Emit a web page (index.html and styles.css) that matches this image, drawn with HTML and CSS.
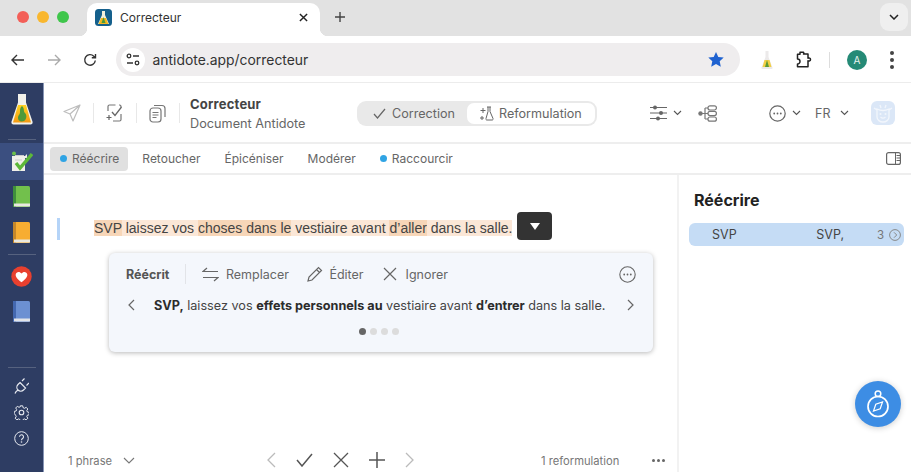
FILE: index.html
```html
<!DOCTYPE html>
<html lang="fr">
<head>
    <meta charset="UTF-8">
    <title>Correcteur</title>
    <link rel="stylesheet" href="styles.css">
</head>
<body>

    <!-- Onglets du navigateur -->
    <div class="tabbar">
        <div class="traffic">
            <span class="light red"></span>
            <span class="light yellow"></span>
            <span class="light green"></span>
        </div>
        <div class="tab">
            <svg class="favicon" width="17" height="17" viewBox="0 0 17 17">
                <rect width="17" height="17" rx="3.500" fill="#15608c"/>
                <path d="M7 2h3v4l4 9H3l4-9z" fill="#f3f0dc"/>
                <path d="M6 9h5l2.400 6H3.600z" fill="#f2b81f"/>
                <path d="M8.500 8l2 6h-4z" fill="#4d9a3a"/>
            </svg>
            <span class="tab-title">Correcteur</span>
            <svg class="tab-close" width="9" height="9" viewBox="0 0 10 10"><path d="M1 1l8 8M9 1l-8 8" stroke="#222" stroke-width="1.600"/></svg>
        </div>
        <svg class="tab-new" width="12" height="12" viewBox="0 0 12 12"><path d="M6 1v10M1 6h10" stroke="#444" stroke-width="1.400"/></svg>
        <div class="tab-menu">
            <svg width="10" height="6" viewBox="0 0 10 6"><path d="M1 1l4 4 4-4" fill="none" stroke="#222" stroke-width="1.500"/></svg>
        </div>
    </div>

    <!-- Barre d'adresse -->
    <div class="toolbar">
        <svg class="nav-back" width="14" height="12" viewBox="0 0 14 12"><path d="M13 6H1.500M6 1L1 6l5 5" fill="none" stroke="#333" stroke-width="1.400"/></svg>
        <svg class="nav-forward" width="14" height="12" viewBox="0 0 14 12"><path d="M1 6h11.500M8 1l5 5-5 5" fill="none" stroke="#aaa" stroke-width="1.400"/></svg>
        <svg class="nav-reload" width="14" height="14" viewBox="0 0 14 14"><path d="M12.300 7.500A5.300 5.300 0 1 1 10.800 3.200L12.500 4.800M12.500 1v3.800H8.800" fill="none" stroke="#333" stroke-width="1.400"/></svg>
        <div class="omnibox">
            <span class="site-icon">
                <svg width="14" height="13" viewBox="0 0 14 13"><circle cx="3" cy="3" r="1.800" fill="none" stroke="#333" stroke-width="1.300"/><path d="M7 3h6M1 10h6" stroke="#333" stroke-width="1.300"/><circle cx="11" cy="10" r="1.800" fill="none" stroke="#333" stroke-width="1.300"/></svg>
            </span>
            <span class="url">antidote.app/correcteur</span>
            <svg class="star" width="16" height="15" viewBox="0 0 16 15"><path d="M8 0l2.300 5 5.400.6-4 3.700 1.100 5.400L8 12l-4.800 2.700 1.100-5.400-4-3.700 5.400-.6z" fill="#1f62d0"/></svg>
        </div>
        <svg class="ext-flask" width="12" height="18" viewBox="0 0 12 18">
            <path d="M4.500 0h3v6l4 10.500a1 1 0 0 1-1 1.500h-9a1 1 0 0 1-1-1.500l4-10.500z" fill="#eceaea"/>
            <path d="M3.500 9h5l2 7H1.500z" fill="#f2cf45"/>
            <path d="M6 9l2 7H4z" fill="#5c9a35"/>
        </svg>
        <svg class="ext-puzzle" width="17" height="17" viewBox="0 0 17 17"><path d="M5 1.200h3.500a1.300 1.300 0 0 1 0 1.800H13v4.300a1.500 1.500 0 0 1 2.500 1.200 1.500 1.500 0 0 1-2.500 1.200V15.800H2.500V13a2.500 2.500 0 0 0 0-5V3.200H5z" fill="none" stroke="#222" stroke-width="1.500" stroke-linejoin="round"/></svg>
        <span class="toolbar-sep"></span>
        <span class="avatar">A</span>
        <span class="kebab"><i></i><i></i><i></i></span>
    </div>

    <div class="app">
        <!-- Barre latérale -->
        <nav class="sidebar">
            <div class="side-logo">
                <svg width="22" height="33" viewBox="0 0 22 33">
                    <defs>
                        <linearGradient id="liquid" x1="0" y1="0" x2="0" y2="1">
                            <stop offset="0" stop-color="#ffd21f"/>
                            <stop offset="1" stop-color="#f39a14"/>
                        </linearGradient>
                    </defs>
                    <path d="M7 1h8v8.500l6.500 19c.5 1.700-.5 3-2 3h-17c-1.500 0-2.500-1.300-2-3L7 9.500z" fill="#f2f1ea"/>
                    <path d="M7 12h8l5 17.500H2z" fill="url(#liquid)"/>
                    <path d="M11 13c3 3 1 5 3 7s2 6-1 8c-3 1-6 0-6-3s2-3 2-6 0-4 2-6z" fill="#4e9a3a"/>
                </svg>
            </div>
            <span class="side-sep logo-sep"></span>
            <div class="side-item active">
                <svg width="22" height="21" viewBox="0 0 22 21">
                    <circle cx="3" cy="2.500" r="2" fill="#6cc04a"/>
                    <path d="M1 5h13l2-2v4l-2 0v13H1z" fill="#f1f0ea"/>
                    <path d="M4 9h7M4 4.500h9" stroke="#ccc" stroke-width="1"/>
                    <path d="M5 12l4 5L21 3" fill="none" stroke="#5db83a" stroke-width="3.400"/>
                </svg>
            </div>
            <div class="side-book first"><svg width="17" height="21" viewBox="0 0 17 21"><rect width="17" height="21" rx="1.500" fill="#72c04c"/><rect width="3" height="21" fill="#3f8f3c"/><rect x="1" y="17.500" width="16" height="3" fill="#e8e8e0"/></svg></div>
            <div class="side-book"><svg width="17" height="21" viewBox="0 0 17 21"><rect width="17" height="21" rx="1.500" fill="#f7ad32"/><rect width="3" height="21" fill="#c5872a"/><rect x="1" y="17.500" width="16" height="3" fill="#e8e8e0"/></svg></div>
            <span class="side-sep"></span>
            <div class="side-heart">
                <svg width="21" height="21" viewBox="0 0 21 21"><circle cx="10.500" cy="10.500" r="10.200" fill="#e8402f"/><path d="M10.500 16.200C5.600 12.500 4.500 10.500 4.700 8.500c.3-2.700 4-3.600 5.800-.9 1.800-2.700 5.500-1.800 5.800.9.200 2-.9 4-5.800 7.700z" fill="#fff"/></svg>
            </div>
            <div class="side-book"><svg width="17" height="21" viewBox="0 0 17 21"><rect width="17" height="21" rx="1.500" fill="#6c90d2"/><rect width="3" height="21" fill="#4468b0"/><rect x="1" y="17.500" width="16" height="3" fill="#e2e4e8"/></svg></div>
            <span class="side-sep bottom-sep"></span>
            <div class="side-tools">
                <svg width="15" height="16" viewBox="0 0 15 16"><path d="M1 15.500c.5-1.500 1.500-2.500 3-3.500M6 4.500L11.500 10 9.500 12c-1.500 1.500-4 1.500-5.500 0s-1.500-4 0-5.500zM8 3L10.500.5M12.500 7.500L15 5" fill="none" stroke="#e6e9f0" stroke-width="1.200"/></svg>
                <svg width="15" height="15" viewBox="0 0 15 15"><circle cx="7.500" cy="7.500" r="2.300" fill="none" stroke="#e6e9f0" stroke-width="1.100"/><path d="M6.300.8h2.400l.4 1.900 1.400.6 1.700-1 1.600 1.700-1 1.600.6 1.400 1.800.4v2.400l-1.800.4-.6 1.400 1 1.600-1.600 1.700-1.700-1-1.400.6-.4 1.700H6.300l-.4-1.700-1.400-.6-1.700 1-1.600-1.700 1-1.600-.6-1.400L.3 8.600V6.400l1.800-.4.6-1.400-1-1.600 1.600-1.700 1.700 1 1.400-.6z" fill="none" stroke="#e6e9f0" stroke-width="1"/></svg>
                <svg width="15" height="15" viewBox="0 0 15 15"><circle cx="7.500" cy="7.500" r="6.800" fill="none" stroke="#e6e9f0" stroke-width="1"/><path d="M5.500 5.800a2 2 0 1 1 3.100 1.700c-.7.500-1.100.9-1.100 1.700" fill="none" stroke="#e6e9f0" stroke-width="1.100"/><circle cx="7.500" cy="11" r=".8" fill="#e6e9f0"/></svg>
            </div>
        </nav>

        <div class="workspace">
            <!-- En-tête de l'application -->
            <header class="app-header">
                <div class="tool-cell">
                    <svg width="18" height="18" viewBox="0 0 18 18"><path d="M17 1L1 7.500l6 2.500 3 7zM7 10L17 1" fill="none" stroke="#bdbdbd" stroke-width="1.200" stroke-linejoin="round"/></svg>
                </div>
                <div class="tool-cell">
                    <svg width="17" height="18" viewBox="0 0 17 18"><path d="M2 7V2.500a1.500 1.500 0 0 1 1.500-1.500h6M13 1h.5A1.500 1.500 0 0 1 15 2.500V3M15 10v5.500a1.500 1.500 0 0 1-1.500 1.500H7" fill="none" stroke="#777" stroke-width="1.200"/><path d="M6 8l3 3.500L15.500 3" fill="none" stroke="#666" stroke-width="1.300"/><path d="M3 11v5M.5 13.500h5" stroke="#666" stroke-width="1.200"/></svg>
                </div>
                <div class="tool-cell">
                    <svg width="17" height="19" viewBox="0 0 17 19"><rect x="1" y="4" width="11" height="14" rx="3" fill="#fff" stroke="#777" stroke-width="1.200"/><path d="M5 1.500h8a3 3 0 0 1 3 3V13" fill="none" stroke="#777" stroke-width="1.200"/><path d="M3.500 8.500h6M3.500 11h6M3.500 13.500h4" stroke="#777" stroke-width="1.100"/></svg>
                </div>
                <div class="doc-title">
                    <strong>Correcteur</strong>
                    <span>Document Antidote</span>
                </div>
                <div class="mode-switch">
                    <div class="mode">
                        <svg width="13" height="11" viewBox="0 0 13 11"><path d="M1 6l3.500 4L12 1" fill="none" stroke="#666" stroke-width="1.200"/></svg>
                        Correction
                    </div>
                    <div class="mode on">
                        <svg width="15" height="15" viewBox="0 0 15 15"><path d="M8 1h4M9 1v4.500L7 12.500a1 1 0 0 0 1 1.500h5a1 1 0 0 0 1-1.500L11 5.500V1" fill="none" stroke="#666" stroke-width="1"/><path d="M4 2v5M1.500 4.500h5M3 10v4M1 12h4" stroke="#666" stroke-width="1"/></svg>
                        Reformulation
                    </div>
                </div>
                <div class="header-right">
                    <svg class="ic-sliders" width="17" height="16" viewBox="0 0 17 16"><path d="M0 2.500h17M0 8h17M0 13.500h17" stroke="#666" stroke-width="1.200"/><circle cx="5" cy="2.500" r="2" fill="#666"/><circle cx="11" cy="8" r="2" fill="#666"/><circle cx="8" cy="13.500" r="2" fill="#666"/></svg>
                    <svg class="chev" width="9" height="6" viewBox="0 0 9 6"><path d="M1 1l3.500 3.500L8 1" fill="none" stroke="#555" stroke-width="1.100"/></svg>
                    <svg class="ic-tree" width="19" height="17" viewBox="0 0 19 17"><circle cx="2.500" cy="8.500" r="2.200" fill="#777"/><path d="M3 8.500h7M7 3v11M7 3h3M7 14h3" fill="none" stroke="#777" stroke-width="1.200"/><rect x="10" y=".8" width="8.400" height="4.200" rx="2" fill="none" stroke="#777" stroke-width="1.200"/><rect x="10" y="6.400" width="8.400" height="4.200" rx="2" fill="none" stroke="#777" stroke-width="1.200"/><rect x="10" y="12" width="8.400" height="4.200" rx="2" fill="none" stroke="#777" stroke-width="1.200"/></svg>
                    <svg class="ic-more" width="17" height="17" viewBox="0 0 17 17"><circle cx="8.500" cy="8.500" r="7.700" fill="none" stroke="#666" stroke-width="1.200"/><circle cx="5.200" cy="8.500" r=".9" fill="#666"/><circle cx="8.500" cy="8.500" r=".9" fill="#666"/><circle cx="11.800" cy="8.500" r=".9" fill="#666"/></svg>
                    <svg class="chev" width="9" height="6" viewBox="0 0 9 6"><path d="M1 1l3.500 3.500L8 1" fill="none" stroke="#555" stroke-width="1.100"/></svg>
                    <span class="lang">FR</span>
                    <svg class="chev" width="9" height="6" viewBox="0 0 9 6"><path d="M1 1l3.500 3.500L8 1" fill="none" stroke="#555" stroke-width="1.100"/></svg>
                    <span class="mascot">
                        <svg width="20" height="19" viewBox="0 0 20 19"><path d="M4 5v8c0 3 3 5 6 5s6-2 6-5V5c-2 1-3 1.500-6 1.500S6 6 4 5zM1 4l3 2M19 4l-3 2M7 1l1 3M13 1l-1 3" fill="none" stroke="#f2f6fc" stroke-width="1.300"/><circle cx="7.500" cy="10" r="1" fill="#f2f6fc"/><circle cx="12.500" cy="10" r="1" fill="#f2f6fc"/><path d="M7.500 13c1.500 1.500 3.500 1.500 5 0" fill="none" stroke="#f2f6fc" stroke-width="1.100"/></svg>
                    </span>
                </div>
            </header>

            <!-- Types de reformulation -->
            <div class="subtabs">
                <div class="subtab selected"><i class="dot"></i>Réécrire</div>
                <div class="subtab">Retoucher</div>
                <div class="subtab">Épicéniser</div>
                <div class="subtab">Modérer</div>
                <div class="subtab"><i class="dot"></i>Raccourcir</div>
                <svg class="panel-toggle" width="15" height="13" viewBox="0 0 15 13"><rect x=".6" y=".6" width="13.800" height="11.800" rx="2" fill="none" stroke="#666" stroke-width="1.200"/><path d="M9.500 1v11M10.500 3.500h3.500M10.500 6h3.500M10.500 8.500h3.500" stroke="#666" stroke-width="1"/></svg>
            </div>

            <div class="content">
                <main class="editor">
                    <div class="sentence-row">
                        <span class="margin-bar"></span>
                        <p class="sentence"><mark class="strong">SVP</mark><mark> laissez vos </mark><mark class="strong">choses dans le</mark><mark> vestiaire avant </mark><mark class="strong">d’aller</mark><mark> dans la salle.</mark></p>
                        <button class="drop-btn"><svg width="10" height="7" viewBox="0 0 10 7"><path d="M0 0h10L5 7z" fill="#fff"/></svg></button>
                    </div>

                    <div class="popup">
                        <div class="popup-actions">
                            <strong class="popup-label">Réécrit</strong>
                            <span class="popup-sep"></span>
                            <span class="action">
                                <svg width="17" height="15" viewBox="0 0 17 15"><path d="M5 1L1 4.500h15" fill="none" stroke="#666" stroke-width="1.200"/><path d="M12 14l4-3.500H1" fill="none" stroke="#666" stroke-width="1.200"/></svg>
                                Remplacer
                            </span>
                            <span class="action">
                                <svg width="16" height="16" viewBox="0 0 16 16"><path d="M1 15l1-4L11.500 1.500l3 3L5 14zM9.500 3.500l3 3" fill="none" stroke="#666" stroke-width="1.200"/></svg>
                                Éditer
                            </span>
                            <span class="action last">
                                <svg width="14" height="14" viewBox="0 0 14 14"><path d="M1 1l12 12M13 1L1 13" stroke="#666" stroke-width="1.200"/></svg>
                                Ignorer
                            </span>
                            <svg class="popup-more" width="17" height="17" viewBox="0 0 17 17"><circle cx="8.500" cy="8.500" r="7.700" fill="none" stroke="#666" stroke-width="1.100"/><circle cx="5.200" cy="8.500" r=".9" fill="#666"/><circle cx="8.500" cy="8.500" r=".9" fill="#666"/><circle cx="11.800" cy="8.500" r=".9" fill="#666"/></svg>
                        </div>
                        <div class="popup-text">
                            <svg width="7" height="12" viewBox="0 0 7 12"><path d="M6 1L1 6l5 5" fill="none" stroke="#666" stroke-width="1.200"/></svg>
                            <p><b>SVP,</b> laissez vos <b>effets personnels au</b> vestiaire avant <b>d’entrer</b> dans la salle.</p>
                            <svg width="7" height="12" viewBox="0 0 7 12"><path d="M1 1l5 5-5 5" fill="none" stroke="#666" stroke-width="1.200"/></svg>
                        </div>
                        <div class="popup-dots"><i class="on"></i><i></i><i></i><i></i></div>
                    </div>

                    <footer class="editor-foot">
                        <span class="foot-left"><span class="foot-text">1 phrase</span>
                            <svg width="12" height="7" viewBox="0 0 12 7"><path d="M1 1l5 5 5-5" fill="none" stroke="#777" stroke-width="1.100"/></svg>
                        </span>
                        <div class="foot-nav">
                            <svg width="10" height="16" viewBox="0 0 10 16"><path d="M9 1L2 8l7 7" fill="none" stroke="#bbb" stroke-width="1.300"/></svg>
                            <svg width="17" height="14" viewBox="0 0 17 14"><path d="M1 7l5 6L16 1" fill="none" stroke="#555" stroke-width="1.500"/></svg>
                            <svg width="16" height="16" viewBox="0 0 16 16"><path d="M1 1l14 14M15 1L1 15" stroke="#555" stroke-width="1.300"/></svg>
                            <svg width="16" height="16" viewBox="0 0 16 16"><path d="M8 0v16M0 8h16" stroke="#555" stroke-width="1.500"/></svg>
                            <svg width="10" height="16" viewBox="0 0 10 16"><path d="M1 1l7 7-7 7" fill="none" stroke="#bbb" stroke-width="1.300"/></svg>
                        </div>
                        <span class="foot-count foot-text">1 reformulation</span>
                        <span class="foot-more"><i></i><i></i><i></i></span>
                    </footer>
                </main>

                <aside class="side-panel">
                    <h2>Réécrire</h2>
                    <div class="panel-row">
                        <span class="col-from">SVP</span>
                        <span class="col-to">SVP,</span>
                        <span class="col-count">3</span>
                        <svg width="12" height="12" viewBox="0 0 12 12"><circle cx="6" cy="6" r="5.400" fill="none" stroke="#888" stroke-width="1"/><path d="M5 3.300L7.700 6 5 8.700" fill="none" stroke="#888" stroke-width="1"/></svg>
                    </div>
                    <button class="fab">
                        <svg width="22" height="28" viewBox="0 0 22 28"><circle cx="11" cy="16.500" r="10" fill="none" stroke="#fff" stroke-width="1.700"/><circle cx="11" cy="3.800" r="2.800" fill="none" stroke="#fff" stroke-width="1.500"/><path d="M15.500 12l-2.300 6.700-6.700 2.300 2.300-6.700z" fill="none" stroke="#fff" stroke-width="1.200"/></svg>
                    </button>
                </aside>
            </div>
        </div>
    </div>

</body>
</html>
```

FILE: styles.css
```css
* {
    box-sizing: border-box;
}

body {
    margin: 0;
    width: 911px;
    height: 472px;
    overflow: hidden;
    display: flex;
    flex-direction: column;
    background-color: #fff;
    font-family: Inter, "Noto Sans", sans-serif;
    color: #666;
}

svg {
    flex: none;
    display: block;
}

/* Onglets du navigateur */
.tabbar {
    height: 36px;
    display: flex;
    align-items: flex-end;
    background-color: #e2e2e2;
}

.traffic {
    display: flex;
    gap: 8px;
    align-self: flex-start;
    padding: 11px 0 0 17px;
    width: 87px;
}

.light {
    width: 12px;
    height: 12px;
    border-radius: 50%;
}

.red { background-color: #f35f58; }
.yellow { background-color: #f9b72f; }
.green { background-color: #3fc64b; }

.tab {
    position: relative;
    width: 233px;
    height: 33px;
    display: flex;
    align-items: center;
    padding: 0 12px 5px 8px;
    background-color: #fff;
    border-radius: 10px 10px 0 0;
}

/* Arrondis évasés au pied de l'onglet */
.tab::before,
.tab::after {
    content: "";
    position: absolute;
    bottom: 0;
    width: 8px;
    height: 8px;
}

.tab::before {
    left: -8px;
    background: radial-gradient(circle at 0 0, transparent 8px, #fff 8.500px);
}

.tab::after {
    right: -8px;
    background: radial-gradient(circle at 100% 0, transparent 8px, #fff 8.500px);
}

.tab-title {
    margin-left: 8px;
    flex: 1;
    font-size: 12px;
    color: #333;
}

.tab-new {
    align-self: flex-start;
    margin: 11px 0 0 14px;
}

.tab-menu {
    margin: 0 3px 5px auto;
    width: 28px;
    height: 28px;
    display: flex;
    align-items: center;
    justify-content: center;
    background-color: #efefef;
    border-radius: 9px;
}

/* Barre d'adresse */
.toolbar {
    height: 47px;
    display: flex;
    align-items: center;
    padding: 1px 0 0 11px;
    background-color: #fff;
    border-bottom: 1px solid #ececec;
}

.nav-forward { margin-left: 22px; }
.nav-reload { margin-left: 22px; }

.omnibox {
    width: 624px;
    height: 33px;
    margin-left: 19px;
    display: flex;
    align-items: center;
    padding: 0 16px 0 5px;
    background-color: #efedee;
    border-radius: 17px;
}

.site-icon {
    width: 24px;
    height: 24px;
    display: flex;
    align-items: center;
    justify-content: center;
    background-color: #fff;
    border-radius: 50%;
}

.url {
    flex: 1;
    margin-left: 7.500px;
    font-size: 13.900px;
    color: #333;
}

.ext-flask { margin-left: 21px; }
.ext-puzzle { margin-left: 22px; }

.toolbar-sep {
    width: 1px;
    height: 16px;
    margin-left: 17px;
    background-color: #ddd;
}

.avatar {
    width: 20px;
    height: 20px;
    margin-left: 17px;
    display: flex;
    align-items: center;
    justify-content: center;
    border-radius: 50%;
    background-color: #258a76;
    color: #e8f3f0;
    font-size: 10px;
}

.kebab {
    margin-left: 23px;
    display: flex;
    flex-direction: column;
    gap: 3px;
}

.kebab i {
    width: 4px;
    height: 4px;
    border-radius: 50%;
    background-color: #444;
}

/* Application */
.app {
    flex: 1;
    display: flex;
    min-height: 0;
}

.sidebar {
    width: 44px;
    display: flex;
    flex-direction: column;
    align-items: center;
    background-color: #2e3d63;
    border-right: 1px solid #8795b5;
}

.side-logo {
    height: 56px;
    padding-top: 10px;
}

.side-sep {
    width: 28px;
    height: 1px;
    margin-top: 11px;
    background-color: #56627f;
}

.logo-sep {
    margin-top: 0;
}

.side-item {
    width: 100%;
    height: 37px;
    margin-top: 3px;
    display: flex;
    align-items: center;
    justify-content: center;
    background-color: #3b4f80;
}

.side-book {
    margin-top: 15px;
    height: 21px;
}

.side-book.first {
    margin-top: 6px;
}

.side-heart {
    margin-top: 11px;
    margin-bottom: -1px;
}

.bottom-sep {
    margin-top: 45px;
}

.side-tools {
    margin-top: 10px;
    display: flex;
    flex-direction: column;
    align-items: center;
    gap: 11px;
}

.workspace {
    flex: 1;
    min-width: 0;
    display: flex;
    flex-direction: column;
}

/* En-tête */
.app-header {
    height: 61px;
    display: flex;
    align-items: center;
    padding: 1px 0 0 19px;
    border-bottom: 2px solid #eee;
}

.tool-cell {
    width: 31px;
    height: 20px;
    margin-right: 12px;
    display: flex;
    align-items: center;
    border-right: 1px solid #e8e8e8;
}

.tool-cell:nth-child(3) {
    margin-right: 0;
}

.doc-title {
    margin-left: 10px;
    width: 167px;
    display: flex;
    flex-direction: column;
    gap: 4px;
    font-size: 12.700px;
    color: #666;
}

.doc-title strong {
    color: #444;
    font-size: 13px;
    letter-spacing: 0.200px;
}

.mode-switch {
    width: 240px;
    height: 25px;
    display: flex;
    align-items: stretch;
    padding: 2px;
    border-radius: 9px;
    background-color: #e9e9e9;
    font-size: 12.600px;
}

.mode {
    width: 108px;
    display: flex;
    align-items: center;
    gap: 6px;
    padding-left: 14px;
    border-radius: 7px;
}

.mode.on {
    flex: 1;
    background-color: #fff;
    padding-left: 12px;
    gap: 5px;
}

.header-right {
    flex: 1;
    display: flex;
    align-items: center;
    padding-left: 53px;
}

.header-right .chev { margin-left: 6px; }
.ic-tree { margin-left: 16px; }
.ic-more { margin-left: 52px; }

.lang {
    margin-left: 14px;
    font-size: 12.500px;
}

.header-right .lang + .chev { margin-left: 10px; }

.mascot {
    margin-left: 22px;
    width: 24px;
    height: 24px;
    display: flex;
    align-items: center;
    justify-content: center;
    background-color: #dbe7f7;
    border-radius: 6px;
}

/* Types de reformulation */
.subtabs {
    height: 31px;
    display: flex;
    align-items: center;
    padding: 0 10px 0 6px;
    border-bottom: 2px solid #eee;
    font-size: 12px;
}

.subtab {
    height: 24px;
    display: flex;
    align-items: center;
    padding: 0 12px;
    border-radius: 4px;
}

.subtab.selected {
    padding: 0 9px 0 10px;
    margin-right: 2px;
    background-color: #e0e0e0;
}

.dot {
    width: 7px;
    height: 7px;
    margin-right: 5px;
    border-radius: 50%;
    background-color: #30a4e4;
}

.panel-toggle {
    margin-left: auto;
}

/* Zone d'édition */
.content {
    flex: 1;
    min-height: 0;
    display: flex;
}

.editor {
    flex: none;
    width: 635px;
    display: flex;
    flex-direction: column;
    border-right: 2px solid #f2f2f2;
}

.sentence-row {
    display: flex;
    align-items: center;
    margin-top: 37px;
    padding-left: 13px;
    height: 28px;
}

.margin-bar {
    width: 3px;
    height: 22px;
    margin-top: 6px;
    background-color: #b5d4f8;
}

.sentence {
    margin: 4px 0 0 34px;
    font-family: "Liberation Sans", Arial, sans-serif;
    font-size: 14px;
    line-height: 16px;
    color: #444;
}

.sentence mark {
    padding: 0;
    color: #444;
    background-color: #fbe7d7;
}

.sentence mark.strong {
    background-color: #f7d6b8;
}

.drop-btn {
    width: 35px;
    height: 28px;
    margin-left: 5px;
    padding: 0;
    display: flex;
    align-items: center;
    justify-content: center;
    border: 0;
    border-radius: 4px;
    background-color: #333;
}

.popup {
    width: 544px;
    height: 99px;
    margin: 13px 0 0 65px;
    padding: 8px 16px 0 17px;
    background-color: #f4f7fc;
    border-radius: 6px;
    box-shadow: 0 1px 5px rgba(0, 0, 0, 0.28);
}

.popup-actions {
    height: 26px;
    display: flex;
    align-items: center;
    font-size: 12.500px;
}

.popup-label {
    color: #555;
    font-size: 12.500px;
}

.popup-sep {
    width: 1px;
    height: 20px;
    margin: 0 16px 0 16px;
    background-color: #e2e4e8;
}

.action {
    display: flex;
    align-items: center;
    gap: 6.500px;
    margin-right: 18px;
}

.action.last {
    gap: 9px;
    margin-left: 1px;
}

.popup-more {
    margin-left: auto;
    margin-right: 1px;
}

.popup-text {
    margin-top: 7px;
    height: 22px;
    display: flex;
    align-items: center;
    font-size: 12.650px;
    color: #444;
}

.popup-text svg:first-child {
    margin-left: 2px;
}

.popup-text svg:last-child {
    margin-right: 3px;
}

.popup-text p {
    flex: 1;
    margin: 0 0 0 19px;
    white-space: nowrap;
}

.popup-text b {
    color: #2c2c2c;
}

.popup-dots {
    margin-top: 12px;
    padding-right: 5px;
    display: flex;
    justify-content: center;
    gap: 4px;
}

.popup-dots i {
    width: 7px;
    height: 7px;
    border-radius: 50%;
    background-color: #dcdcdc;
}

.popup-dots i.on {
    background-color: #666;
}

.editor-foot {
    margin-top: auto;
    height: 24px;
    display: flex;
    align-items: center;
    padding-left: 24px;
    font-size: 11.200px;
    color: #777;
}

.foot-text {
    padding-top: 1px;
}

.foot-left {
    width: 198px;
    display: flex;
    align-items: center;
    gap: 11px;
}

.foot-nav {
    display: flex;
    align-items: center;
    gap: 20px;
}

.foot-count {
    margin-left: 126px;
}

.foot-more {
    margin-left: 33px;
    display: flex;
    gap: 2px;
}

.foot-more i {
    width: 3px;
    height: 3px;
    border-radius: 50%;
    background-color: #666;
}

/* Panneau de droite */
.side-panel {
    flex: 1;
    min-width: 0;
    position: relative;
    padding: 15px 7px 0 10px;
}

.side-panel h2 {
    margin: 0 0 12px 5px;
    font-size: 16px;
    line-height: 21px;
    font-weight: 700;
    color: #222;
}

.panel-row {
    height: 23px;
    display: flex;
    align-items: center;
    padding: 0 3px 0 23px;
    border-radius: 6px;
    background-color: #c5dcf5;
    font-size: 12.500px;
    color: #444;
}

.col-from { width: 105px; }
.col-to { width: 61px; }

.col-count {
    margin-right: 5px;
    font-size: 11.500px;
    color: #777;
}

.fab {
    position: absolute;
    left: 176px;
    top: 206px;
    width: 46px;
    height: 46px;
    padding: 0;
    display: flex;
    align-items: center;
    justify-content: center;
    border: 0;
    border-radius: 50%;
    background-color: #3d8de4;
    box-shadow: 0 1px 6px rgba(0, 0, 0, 0.2);
}
```
